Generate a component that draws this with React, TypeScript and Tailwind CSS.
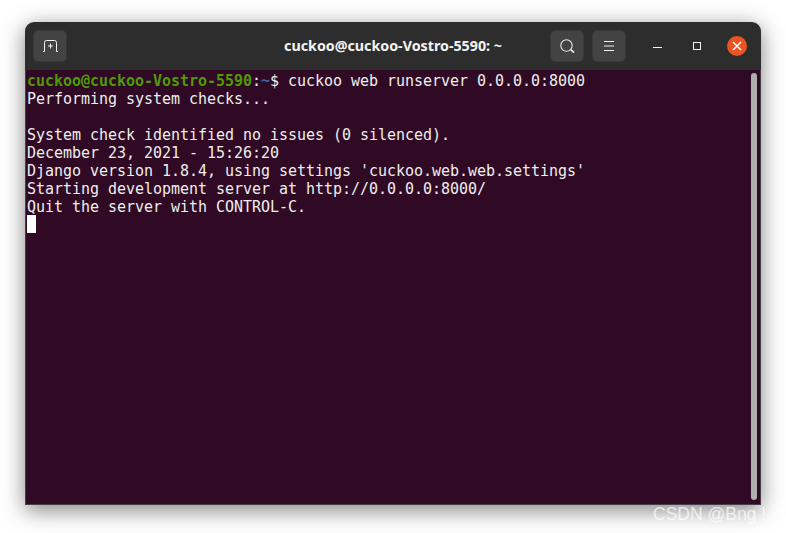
import React from "react"

function HeaderButton(props: { children: React.ReactNode; className?: string }) {
  return (
    <div
      className={`flex h-8 w-[34px] items-center justify-center rounded-[5px] border border-[#383838] bg-[#434343] ${props.className ?? ""}`}
    >
      {props.children}
    </div>
  )
}

function NewTabIcon() {
  return (
    <svg width="15" height="12" viewBox="0 0 15 12" fill="none" stroke="#f2f2f2" strokeWidth="1">
      <path d="M0 11.5H1.5V2.5Q1.5 0.5 3.5 0.5H11.5Q13.5 0.5 13.5 2.5V11.5H15" />
      <path d="M7.5 3.5V8.5M5 6H10" />
    </svg>
  )
}

function SearchIcon() {
  return (
    <svg width="15" height="14" viewBox="0 0 15 14" fill="none" stroke="#e6e6e6" strokeWidth="1.1">
      <circle cx="6.5" cy="6.5" r="5.7" />
      <path d="M10.6 10.4L14 13.6" strokeWidth="1.8" />
    </svg>
  )
}

function MenuIcon() {
  return (
    <svg width="12" height="10" viewBox="0 0 12 10" stroke="#f2f2f2" strokeWidth="1">
      <path d="M1 0.5H11M1 5H11M1 9.5H11" />
    </svg>
  )
}

function CloseIcon() {
  return (
    <svg width="10" height="10" viewBox="0 0 10 10" stroke="#ffffff" strokeWidth="1.5">
      <path d="M1 1L9 9M9 1L1 9" />
    </svg>
  )
}

function TitleBar() {
  return (
    <div className="flex h-12 shrink-0 items-center rounded-t-[9px] bg-[#2d2d2d] px-2">
      <div className="flex flex-1 items-center">
        <HeaderButton>
          <NewTabIcon />
        </HeaderButton>
      </div>
      <div className="font-['Noto_Sans'] text-[14.25px] font-bold text-[#f4f4f4]">
        cuckoo@cuckoo-Vostro-5590: ~
      </div>
      <div className="flex flex-1 items-center justify-end">
        <HeaderButton className="mr-2">
          <SearchIcon />
        </HeaderButton>
        <HeaderButton>
          <MenuIcon />
        </HeaderButton>
        <div className="mt-[3px] mr-[31px] ml-[27px] h-px w-[9px] bg-[#f2f2f2]" />
        <div className="h-2 w-2 border border-[#f2f2f2]" />
        <div className="mr-[6px] ml-[26px] flex h-5 w-5 items-center justify-center rounded-full bg-[#e95420]">
          <CloseIcon />
        </div>
      </div>
    </div>
  )
}

function Terminal() {
  return (
    <div className="relative flex-1 overflow-hidden border-x border-b border-[#454048] bg-[#300a24] pt-[2px] pl-[1px]">
      <pre className="-mb-px font-['DejaVu_Sans_Mono'] text-[15px] leading-[18px] tracking-[-0.03px] text-[#eeeeec]">
        <span className="font-bold text-[#4e9a06]">cuckoo@cuckoo-Vostro-5590</span>
        :<span className="font-bold text-[#3465a4]">~</span>$ cuckoo web runserver 0.0.0.0:8000{"\n"}
        Performing system checks...{"\n"}
        {"\n"}
        System check identified no issues (0 silenced).{"\n"}
        December 23, 2021 - 15:26:20{"\n"}
        Django version 1.8.4, using settings 'cuckoo.web.web.settings'{"\n"}
        Starting development server at http://0.0.0.0:8000/{"\n"}
        Quit the server with CONTROL-C.
      </pre>
      <div className="h-[18px] w-[9px] bg-white" />
      <div className="absolute top-[3px] right-[3px] bottom-[4px] w-[6px] rounded-full bg-[#b0adaf]" />
    </div>
  )
}

export default function App() {
  return (
    <div className="relative h-[533px] w-[786px] overflow-hidden bg-white pt-[22px] pl-[25px]">
      <div className="flex h-[483px] w-[736px] flex-col rounded-t-[9px] shadow-[0_5px_22px_rgba(0,0,0,0.5)]">
        <TitleBar />
        <Terminal />
      </div>
      <div className="absolute top-[501px] left-[653px] font-['Liberation_Sans'] text-[17.5px] whitespace-nowrap text-[#ffffff]/70">
        CSDN @Bng !
      </div>
    </div>
  )
}
